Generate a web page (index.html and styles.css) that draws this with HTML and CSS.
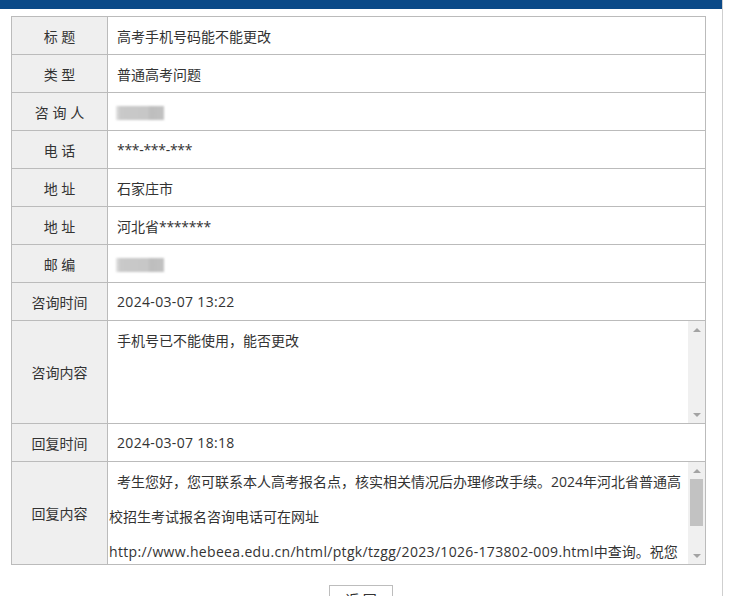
FILE: index.html
```html
<!DOCTYPE html>
<html lang="zh-CN">
<head>
<meta charset="utf-8">
<title>咨询详情</title>
<link rel="stylesheet" href="styles.css">
</head>
<body>
<div class="page">
  <div class="topbar"></div>
  <table class="info">
    <colgroup><col class="col-label"><col class="col-value"></colgroup>
    <tr><th>标 题</th><td>高考手机号码能不能更改</td></tr>
    <tr><th>类 型</th><td>普通高考问题</td></tr>
    <tr><th>咨 询 人</th><td><span class="masked"></span></td></tr>
    <tr><th>电 话</th><td><span class="stars">***-***-***</span></td></tr>
    <tr><th>地 址</th><td>石家庄市</td></tr>
    <tr><th>地 址</th><td>河北省<span class="stars">*******</span></td></tr>
    <tr><th>邮 编</th><td><span class="masked"></span></td></tr>
    <tr><th>咨询时间</th><td><span class="en">2024-03-07 13:22</span></td></tr>
    <tr class="tall"><th>咨询内容</th><td class="box-cell">
      <div class="textbox">
        <div class="textbox-text"><p class="first">手机号已不能使用，能否更改</p></div>
        <div class="scrollbar">
          <span class="sb-btn"><span class="arrow-up"></span></span>
          <span class="sb-track"></span>
          <span class="sb-btn"><span class="arrow-down"></span></span>
        </div>
      </div>
    </td></tr>
    <tr><th>回复时间</th><td><span class="en">2024-03-07 18:18</span></td></tr>
    <tr class="tall"><th>回复内容</th><td class="box-cell">
      <div class="textbox">
        <div class="textbox-text">
          <p class="first">考生您好，您可联系本人高考报名点，核实相关情况后办理修改手续。2024年河北省普通高</p>
          <p>校招生考试报名咨询电话可在网址</p>
          <p><span class="en">http://www.hebeea.edu.cn/html/ptgk/tzgg/2023/1026-173802-009.html</span>中查询。祝您</p>
        </div>
        <div class="scrollbar">
          <span class="sb-btn"><span class="arrow-up"></span></span>
          <span class="sb-track"><span class="sb-thumb"></span></span>
          <span class="sb-btn"><span class="arrow-down"></span></span>
        </div>
      </div>
    </td></tr>
  </table>
  <div class="actions"><button class="btn" type="button">返 回</button></div>
</div>
</body>
</html>
```
FILE: styles.css
```css
html, body {
  margin: 0;
  padding: 0;
  background: #fff;
}
body {
  font-family: "Open Sans", "Noto Sans CJK SC", sans-serif;
  font-size: 14px;
  color: #333;
}
.page {
  width: 722px;
  min-height: 596px;
  border-right: 1px solid #cfcfcf;
  box-sizing: content-box;
}
.topbar {
  height: 9px;
  background: #0b4a88;
}
.info {
  margin: 7px 0 0 11px;
  width: 695px;
  border-collapse: collapse;
  table-layout: fixed;
}
.col-label { width: 96px; }
.info th, .info td {
  border: 1px solid #bbbbbb;
  height: 37px;
  padding: 0;
  vertical-align: middle;
  font-weight: normal;
  white-space: nowrap;
}
.info th {
  background: #efefef;
  text-align: center;
}
.info td {
  padding-left: 9px;
  text-align: left;
}
.info tr.tall th, .info tr.tall td { height: 102px; }
.info td.box-cell { padding: 0; }
.en { letter-spacing: 0.33px; }
.stars { letter-spacing: -0.3px; }
.masked {
  display: inline-block;
  width: 48px;
  height: 14px;
  vertical-align: middle;
  background: linear-gradient(90deg, #e4e4e4 0, #c9c9c9 4px, #c7c7c7 32px, #bdbdbd 34px, #c2c2c2 48px);
  filter: blur(1px);
  margin-left: -1px;
}
.textbox {
  display: flex;
  height: 102px;
}
.textbox-text {
  flex: 1;
  overflow: hidden;
  padding: 2px 0 0 1px;
  line-height: 35px;
}
.textbox-text p {
  margin: 0;
  white-space: nowrap;
}
.textbox-text p.first { text-indent: 8px; }
.scrollbar {
  width: 17px;
  background: #f0f0f0;
  display: flex;
  flex-direction: column;
}
.sb-btn {
  height: 17px;
  display: flex;
  align-items: center;
  justify-content: center;
}
.sb-track {
  flex: 1;
  display: flex;
  flex-direction: column;
  padding: 0 2px;
}
.sb-thumb {
  height: 47px;
  background: #c2c2c2;
}
.arrow-up, .arrow-down {
  width: 0;
  height: 0;
  border-left: 4px solid transparent;
  border-right: 4px solid transparent;
}
.arrow-up { border-bottom: 4px solid #a3a3a3; }
.arrow-down { border-top: 4px solid #a3a3a3; }
.actions {
  display: flex;
  justify-content: center;
  padding-top: 20px;
}
.btn {
  width: 64px;
  height: 28px;
  border: 1px solid #bdbdbd;
  background: #fff;
  font-family: "Open Sans", "Noto Sans CJK SC", sans-serif;
  font-size: 14px;
  color: #333;
  padding: 0;
}
```
